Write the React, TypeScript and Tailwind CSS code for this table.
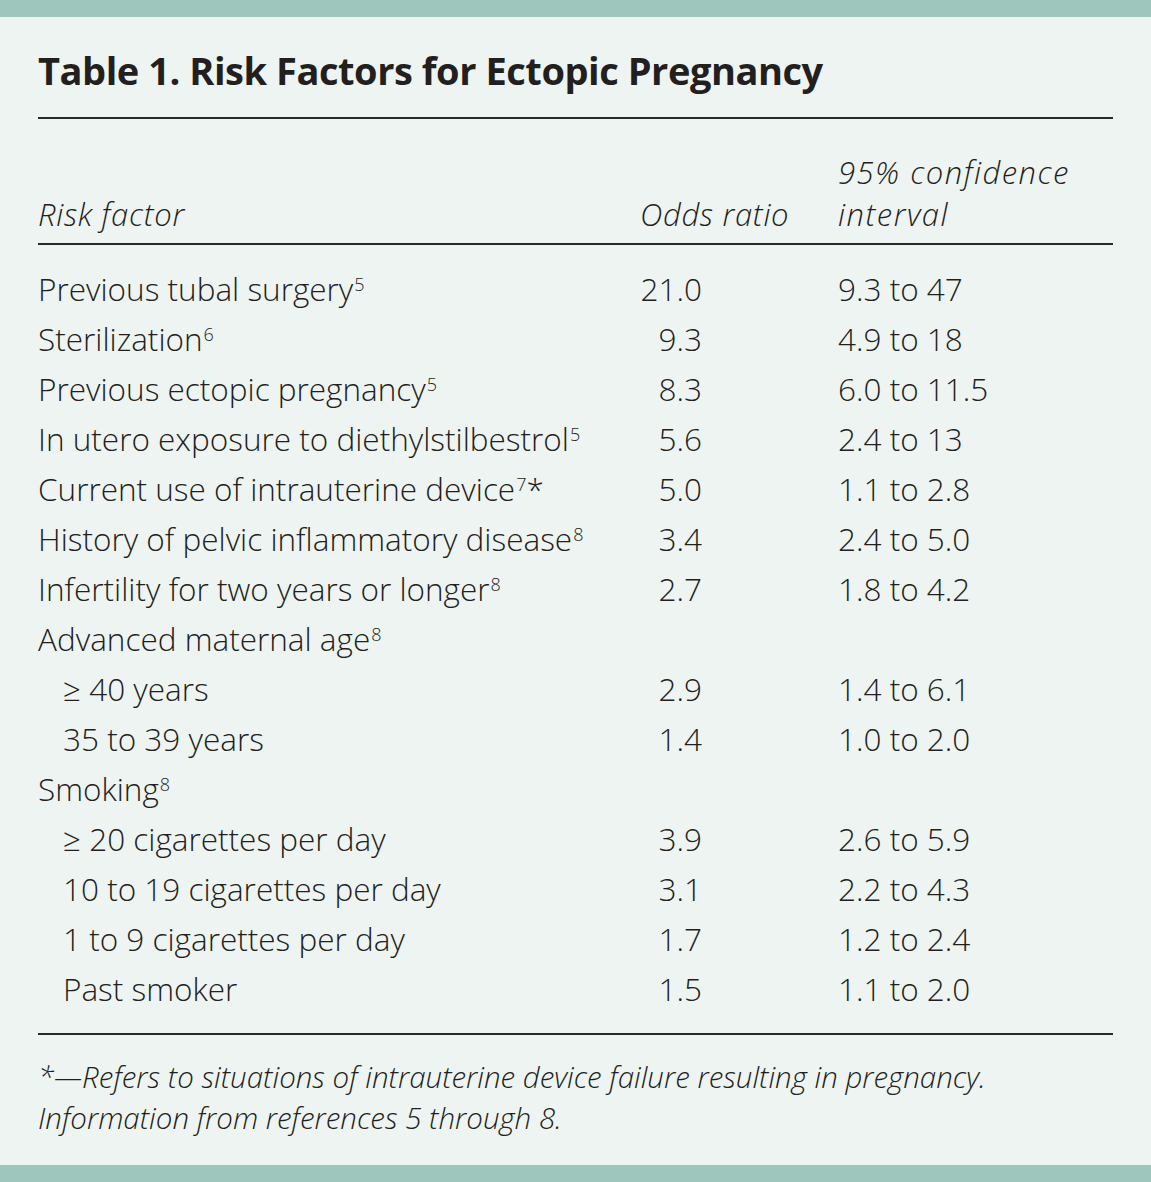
import React from 'react';

type Row = {
  factor: string;
  sup?: string;
  star?: boolean;
  odds?: string;
  ci?: string;
  indent?: boolean;
};

const rows: Row[] = [
  { factor: 'Previous tubal surgery', sup: '5', odds: '21.0', ci: '9.3 to 47' },
  { factor: 'Sterilization', sup: '6', odds: '9.3', ci: '4.9 to 18' },
  { factor: 'Previous ectopic pregnancy', sup: '5', odds: '8.3', ci: '6.0 to 11.5' },
  { factor: 'In utero exposure to diethylstilbestrol', sup: '5', odds: '5.6', ci: '2.4 to 13' },
  { factor: 'Current use of intrauterine device', sup: '7', star: true, odds: '5.0', ci: '1.1 to 2.8' },
  { factor: 'History of pelvic inflammatory disease', sup: '8', odds: '3.4', ci: '2.4 to 5.0' },
  { factor: 'Infertility for two years or longer', sup: '8', odds: '2.7', ci: '1.8 to 4.2' },
  { factor: 'Advanced maternal age', sup: '8' },
  { factor: '≥ 40 years', odds: '2.9', ci: '1.4 to 6.1', indent: true },
  { factor: '35 to 39 years', odds: '1.4', ci: '1.0 to 2.0', indent: true },
  { factor: 'Smoking', sup: '8' },
  { factor: '≥ 20 cigarettes per day', odds: '3.9', ci: '2.6 to 5.9', indent: true },
  { factor: '10 to 19 cigarettes per day', odds: '3.1', ci: '2.2 to 4.3', indent: true },
  { factor: '1 to 9 cigarettes per day', odds: '1.7', ci: '1.2 to 2.4', indent: true },
  { factor: 'Past smoker', odds: '1.5', ci: '1.1 to 2.0', indent: true },
];

export default function App() {
  return (
    <div
      className="w-[1151px] h-[1182px] bg-[#eef4f2] flex flex-col text-[#231f20]"
      style={{ fontFamily: '"Open Sans", "Noto Sans", sans-serif' }}
    >
      <div className="h-[17px] shrink-0 bg-[#9fc6bc]" />

      <div className="flex-1 min-h-0 px-[38px]">
        {/* Title */}
        <h1 className="pt-[28px] text-[38px] leading-[50px] font-bold tracking-[-0.45px]">
          Table 1. Risk Factors for Ectopic Pregnancy
        </h1>
        <div className="mt-[22px] border-t-2 border-[#2b2829]" />

        {/* Header */}
        <div className="grid grid-cols-[600px_200px_1fr] items-end pt-[32px] pb-[8px] text-[31px] leading-[42px] italic font-[350] tracking-[0.7px] border-b-2 border-[#2b2829]">
          <div>Risk factor</div>
          <div className="pl-[2px]">Odds ratio</div>
          <div className="tracking-[1.5px]">
            95% confidence
            <br />
            interval
          </div>
        </div>

        {/* Body */}
        <div className="pt-[19px] pb-[19px] border-b-2 border-[#2b2829]">
          {rows.map((r, i) => (
            <div
              key={i}
              className="grid grid-cols-[600px_200px_1fr] h-[50px] text-[31.5px] leading-[50px] font-[350]"
            >
              <div className={r.indent ? 'pl-[25px]' : ''}>
                {r.factor}
                {r.sup && (
                  <span className="relative -top-[10px] text-[18px] leading-none ml-[1px]">
                    {r.sup}
                  </span>
                )}
                {r.star && <span>*</span>}
              </div>
              <div>
                <span className="inline-block w-[64px] text-right">{r.odds}</span>
              </div>
              <div>{r.ci}</div>
            </div>
          ))}
        </div>

        {/* Footnote */}
        <div className="pt-[21px] text-[29.5px] leading-[41px] italic font-[350]">
          <p>*—Refers to situations of intrauterine device failure resulting in pregnancy.</p>
          <p>Information from references 5 through 8.</p>
        </div>
      </div>

      <div className="h-[17px] shrink-0 bg-[#9fc6bc]" />
    </div>
  );
}
